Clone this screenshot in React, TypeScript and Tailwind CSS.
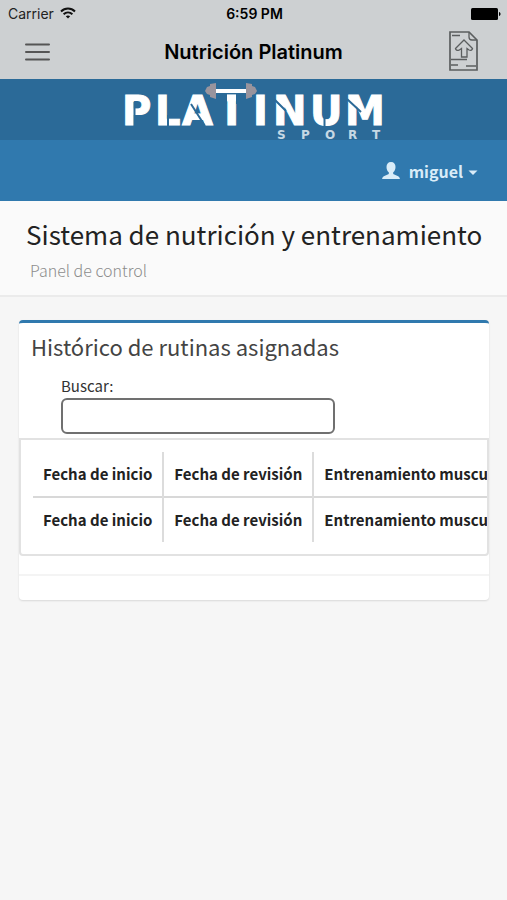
import type { ReactNode } from "react";

const columns = ["Fecha de inicio", "Fecha de revisión", "Entrenamiento muscular"];

function StatusBar() {
  return (
    <div className="grid grid-cols-3 items-center pt-1 pr-1.5 pl-2 text-sm leading-5 text-[#222]">
      <div className="flex items-center gap-1">
        <span>Carrier</span>
        <svg className="h-4 w-5" viewBox="0 0 20 16" fill="none" stroke="#111" strokeWidth="2" aria-hidden="true">
          <path d="M3 5.500C7 1.600 13 1.600 17 5.500M5.600 8.200c2.600-2.400 6.200-2.400 8.800 0" />
          <path d="M7.800 10.300c1.300-1.100 3.100-1.100 4.400 0L10 12.600z" fill="#111" stroke="none" />
        </svg>
      </div>
      <span className="text-center font-semibold text-black">6:59 PM</span>
      <svg className="h-3 w-8 justify-self-end" viewBox="0 0 32 12" aria-hidden="true">
        <rect x="2" width="27" height="12" rx="1.500" />
        <path d="M30 4c2 .5 2 3.500 0 4z" />
      </svg>
    </div>
  );
}

function NavBar() {
  return (
    <div className="grid grid-cols-[1fr_auto_1fr] items-center px-6 pt-[7px]">
      <button type="button" aria-label="Menú" className="justify-self-start">
        <svg className="h-6 w-7" viewBox="0 0 28 24" stroke="#555" strokeWidth="2" strokeLinecap="round">
          <path d="M2 4.500h23M2 12h23M2 19.500h23" />
        </svg>
      </button>
      <h1 className="text-xl leading-6 font-semibold text-black">Nutrición Platinum</h1>
      <button type="button" aria-label="Subir documento" className="justify-self-end pr-1">
        <svg className="h-[42px] w-8" viewBox="0 0 32 42" fill="none" stroke="#5b5e5f" strokeWidth="1.300">
          <path d="M3 1h19l8 8v30H3z" strokeWidth="1.700" />
          <path d="M22 1v5q0 3 3 3h5M5 4.500h8M4 28.500h16M4 34h7M19 35h10" />
          <path d="M17 9l8.500 8.500q-.5 2.500-3.500 1.500l-2-1.500V26h-5.500v-8.500L12 19.200q-3 .8-3.500-1.700z" />
        </svg>
      </button>
    </div>
  );
}

function Logo() {
  return (
    <svg className="h-[61px] w-[270px]" viewBox="0 0 270 61" role="img" aria-label="Platinum Sport">
      <text
        y="46"
        x="3 36 63 99 134 154 191 226"
        fontSize="40"
        fontWeight="700"
        fill="#fff"
        stroke="#fff"
        strokeWidth="1"
        fontFamily="DejaVu Sans, sans-serif"
      >
        PLATINUM
      </text>
      <path
        d="M15.500 23v26M49 36v12M72 25l14 22M155 20l12 12M205.500 36v12M228 20l14 13"
        stroke="#2b6a98"
        strokeWidth="2"
        fill="none"
      />
      <path d="M98 7h10v18H98zM117 7h12v18h-12z" fill="#2b6a98" />
      <rect x="97" y="10" width="32" height="4" fill="#fff" />
      <path
        d="M86 12l2-4 3-1V5l6-1v16l-6-2v-2l-3-1zM138 12l-2-4-3-1V5l-6-1v16l6-2v-2l3-1z"
        fill="#99949d"
      />
      <text
        y="60"
        x="158 182 206 229 253"
        fontSize="12"
        fontWeight="700"
        fill="#c6d8e4"
        fontFamily="DejaVu Sans, sans-serif"
      >
        SPORT
      </text>
    </svg>
  );
}

function UserMenu() {
  return (
    <div className="flex h-[61px] items-center justify-end bg-[#3079ae] px-7">
      <button type="button" className="flex items-center gap-2 text-base leading-6 font-bold text-[#d9ecf8]">
        <svg className="h-5 w-5" viewBox="0 0 20 20" fill="currentColor" aria-hidden="true">
          <path d="M10 1c3 0 4.500 2 4.500 5 0 2.500-1 4.300-2.300 5.300v1.600l5 2.300q1.300.7 1.800 2.800H1q.5-2.100 1.800-2.800l5-2.300v-1.600C6.500 10.300 5.500 8.500 5.500 6c0-3 1.500-5 4.500-5z" />
        </svg>
        <span className="flex items-center gap-1">
          miguel
          <svg className="mt-1 h-2 w-3" viewBox="0 0 12 8" fill="currentColor" aria-hidden="true">
            <path d="M1.500 1.500h9L6 6z" />
          </svg>
        </span>
      </button>
    </div>
  );
}

function Cell({ children }: { children: ReactNode }) {
  return (
    <th scope="col" className="border-r-2 border-[#dcdcdc] px-[10px] py-[10px] text-left font-bold whitespace-nowrap">
      {children}
    </th>
  );
}

function HistoryCard() {
  return (
    <section className="rounded border-t-[3px] border-[#3079ae] bg-white shadow-[0_1px_2px_rgba(0,0,0,0.12)]">
      <h3 className="px-3 pt-[5px] text-[22px] leading-9 text-[#444]">Histórico de rutinas asignadas</h3>
      <div className="flex flex-col items-start px-[42px] pt-[10px] pb-1">
        <label htmlFor="search" className="text-[15px] leading-6 text-[#333]">
          Buscar:
        </label>
        <input
          id="search"
          type="search"
          className="h-9 w-[71%] rounded-md border-2 border-[#707070] bg-white px-2 outline-none"
        />
      </div>
      <div className="overflow-hidden rounded-b border-2 border-[#e2e2e2] py-3 pl-3">
        <table className="border-collapse text-[15px] leading-6 text-[#222]">
          <thead>
            <tr className="border-b-2 border-[#d8d8d8]">
              {columns.map((name) => (
                <Cell key={name}>{name}</Cell>
              ))}
            </tr>
          </thead>
          <tfoot>
            <tr>
              {columns.map((name) => (
                <Cell key={name}>{name}</Cell>
              ))}
            </tr>
          </tfoot>
        </table>
      </div>
      <div className="h-5 border-b-2 border-[#f4f4f4]" />
      <div className="h-6" />
    </section>
  );
}

export default function App() {
  return (
    <div className="min-h-screen bg-[#f6f6f6] font-['Noto_Sans_CJK_SC','Noto_Sans',sans-serif]">
      <header>
        <div className="h-[79px] bg-[#cdd0d2] font-[Inter,sans-serif]">
          <StatusBar />
          <NavBar />
        </div>
        <a href="#inicio" className="flex h-[61px] justify-center bg-[#2b6a98]">
          <Logo />
        </a>
        <UserMenu />
      </header>
      <main>
        <div className="border-b-2 border-[#ebebeb] bg-[#fafafa] px-[26px] pt-[15px] pb-[11px]">
          <h2 className="text-[26px] leading-9 whitespace-nowrap text-[#222]">Sistema de nutrición y entrenamiento</h2>
          <p className="px-1 pt-1 text-base leading-7 font-light text-[#8c8c8c]">Panel de control</p>
        </div>
        <div className="pt-[23px] pr-[18px] pl-[19px]">
          <HistoryCard />
        </div>
      </main>
    </div>
  );
}
